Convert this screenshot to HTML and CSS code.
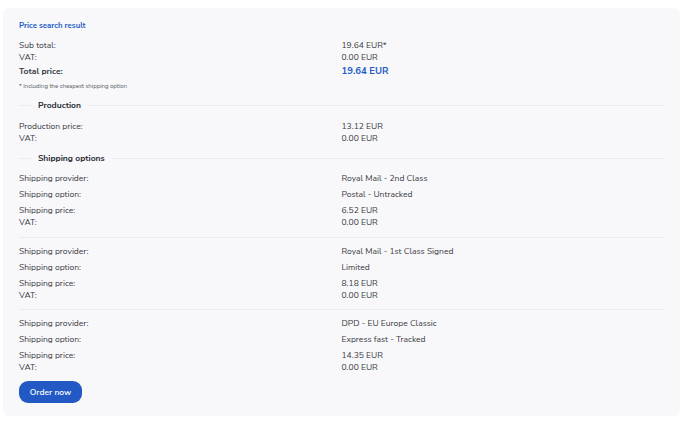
FILE: index.html
```html
<!DOCTYPE html>
<html>
<head>
<meta charset="utf-8">
<link rel="stylesheet" href="styles.css">
</head>
<body>
<div class="card">
  <div class="title">Price search result</div>
  <div class="summary">
    <div class="row"><span>Sub total:</span><span>19.64 EUR*</span></div>
    <div class="row"><span>VAT:</span><span>0.00 EUR</span></div>
    <div class="row total"><span class="strong">Total price:</span><span class="big">19.64 EUR</span></div>
  </div>
  <div class="note">* Including the cheapest shipping option</div>

  <div class="divider first"><span class="pre"></span><span class="dtext">Production</span><span class="post"></span></div>
  <div class="group prod">
    <div class="row"><span>Production price:</span><span>13.12 EUR</span></div>
    <div class="row"><span>VAT:</span><span>0.00 EUR</span></div>
  </div>

  <div class="divider"><span class="pre"></span><span class="dtext">Shipping options</span><span class="post"></span></div>

  <div class="ship first">
    <div class="row gap"><span>Shipping provider:</span><span>Royal Mail - 2nd Class</span></div>
    <div class="row gap"><span>Shipping option:</span><span>Postal - Untracked</span></div>
    <div class="row"><span>Shipping price:</span><span>6.52 EUR</span></div>
    <div class="row"><span>VAT:</span><span>0.00 EUR</span></div>
  </div>
  <div class="ship">
    <div class="row gap"><span>Shipping provider:</span><span>Royal Mail - 1st Class Signed</span></div>
    <div class="row gap"><span>Shipping option:</span><span>Limited</span></div>
    <div class="row"><span>Shipping price:</span><span>8.18 EUR</span></div>
    <div class="row"><span>VAT:</span><span>0.00 EUR</span></div>
  </div>
  <div class="ship last">
    <div class="row gap"><span>Shipping provider:</span><span>DPD - EU Europe Classic</span></div>
    <div class="row gap"><span>Shipping option:</span><span>Express fast - Tracked</span></div>
    <div class="row"><span>Shipping price:</span><span>14.35 EUR</span></div>
    <div class="row"><span>VAT:</span><span>0.00 EUR</span></div>
  </div>

  <button class="order">Order now</button>
</div>
</body>
</html>
```

FILE: styles.css
```css
* { box-sizing: border-box; }
html, body { margin: 0; padding: 0; background: #ffffff; }
body {
  font-family: "Nunito Sans", Lato, "Open Sans", sans-serif;
  color: #383b42;
  font-size: 8.5px;
  padding: 8px 8px 0 3px;
}
.card {
  width: 677px;
  height: 408px;
  background: #f8f8fb;
  border-radius: 6px;
  padding: 13px 16px 0 16px;
}
.title {
  color: #1f5cc6;
  font-weight: 700;
  font-size: 7.8px;
  line-height: 10px;
  margin-bottom: 8px;
}
.row {
  display: grid;
  grid-template-columns: 1fr 1fr;
  line-height: 10px;
  height: 12px;
  align-items: center;
}
.row.gap { margin-bottom: 4px; }
.row.total { height: 16px; }
.strong { font-weight: 700; }
.big { color: #1f5cc6; font-weight: 700; font-size: 9.5px; }
.note {
  font-size: 6px;
  color: #55585f;
  margin-top: 3px;
  line-height: 8px;
}
.divider {
  display: flex;
  align-items: center;
  height: 14px;
  margin: 7px 0 7px;
}
.divider.first { margin-top: 8px; }
.divider .pre { width: 12px; border-top: 1px solid #ebecf0; }
.divider .post { flex: 1; border-top: 1px solid #ebecf0; }
.dtext {
  font-weight: 700;
  font-size: 8.5px;
  color: #2a2d33;
  padding: 0 7px;
}
.group.prod { padding-top: 1px; }
.ship {
  padding: 7px 0 8px;
  border-bottom: 1px solid #ebecf0;
}
.ship.first { padding-top: 0; padding-bottom: 9px; }
.ship.last { border-bottom: none; padding-bottom: 8px; }
.order {
  display: block;
  width: 63px;
  height: 22px;
  border: none;
  border-radius: 9px;
  background: #2259c5;
  color: #ffffff;
  font-family: inherit;
  font-size: 8.5px;
  font-weight: 600;
  padding: 0;
}
```
